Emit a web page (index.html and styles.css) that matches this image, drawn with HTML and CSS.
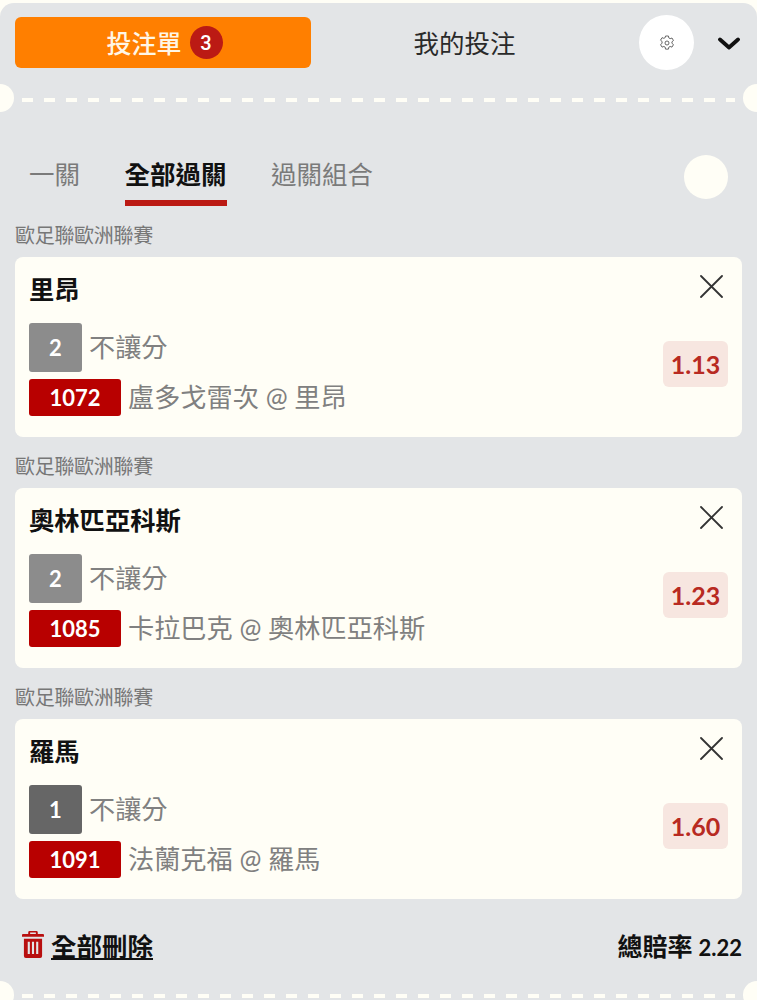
FILE: index.html
```html
<!DOCTYPE html>
<html lang="zh-Hant">
<head>
<meta charset="utf-8">
<title>投注單</title>
<link rel="stylesheet" href="styles.css">
</head>
<body>
<main class="sheet">
  <header class="top">
    <button class="tab-main"><span class="tab-main-txt">投注單</span><span class="count">3</span></button>
    <div class="tab-other">我的投注</div>
    <div class="gear">
      <svg width="16" height="16" viewBox="0 0 24 24" fill="none" stroke="#444" stroke-width="1.200" stroke-linejoin="round"><path d="M9.800 1.500h4.400l.5 2.900 2 1.100 2.800-1 2.200 3.800-2.300 1.900v2.300l2.300 1.900-2.200 3.800-2.800-1-2 1.100-.5 2.900H9.800l-.5-2.900-2-1.100-2.800 1-2.200-3.800 2.300-1.900V9.700L2.300 7.800l2.200-3.800 2.800 1 2-1.100z"/><circle cx="12" cy="12" r="3"/></svg>
    </div>
    <svg class="chev" width="22" height="13" viewBox="0 0 22 13" fill="none" stroke="#111" stroke-width="3.800" stroke-linecap="round" stroke-linejoin="round"><path d="M2 2.500l9 8 9-8"/></svg>
  </header>
  <div class="dash"></div>
  <span class="notch notch-l"></span>
  <span class="notch notch-r"></span>

  <nav class="tabs">
    <span class="tab">一關</span>
    <span class="tab tab-active">全部過關</span>
    <span class="tab">過關組合</span>
    <span class="dot"></span>
  </nav>

  <section class="group">
    <div class="league">歐足聯歐洲聯賽</div>
    <article class="card">
      <div class="card-head">
        <h2 class="team">里昂</h2>
        <svg class="close" width="24" height="24" viewBox="0 0 24 24" stroke="#333" stroke-width="1.800" stroke-linecap="round"><path d="M2 2l21 21M23 2L2 23"/></svg>
      </div>
      <div class="card-body">
        <div class="info">
          <div class="line"><span class="num">2</span><span class="txt">不讓分</span></div>
          <div class="line line-match"><span class="code">1072</span><span class="txt">盧多戈雷次 @ 里昂</span></div>
        </div>
        <div class="odds">1.13</div>
      </div>
    </article>
  </section>

  <section class="group">
    <div class="league">歐足聯歐洲聯賽</div>
    <article class="card">
      <div class="card-head">
        <h2 class="team">奧林匹亞科斯</h2>
        <svg class="close" width="24" height="24" viewBox="0 0 24 24" stroke="#333" stroke-width="1.800" stroke-linecap="round"><path d="M2 2l21 21M23 2L2 23"/></svg>
      </div>
      <div class="card-body">
        <div class="info">
          <div class="line"><span class="num">2</span><span class="txt">不讓分</span></div>
          <div class="line line-match"><span class="code">1085</span><span class="txt">卡拉巴克 @ 奧林匹亞科斯</span></div>
        </div>
        <div class="odds">1.23</div>
      </div>
    </article>
  </section>

  <section class="group">
    <div class="league">歐足聯歐洲聯賽</div>
    <article class="card">
      <div class="card-head">
        <h2 class="team">羅馬</h2>
        <svg class="close" width="24" height="24" viewBox="0 0 24 24" stroke="#333" stroke-width="1.800" stroke-linecap="round"><path d="M2 2l21 21M23 2L2 23"/></svg>
      </div>
      <div class="card-body">
        <div class="info">
          <div class="line"><span class="num num-dark">1</span><span class="txt">不讓分</span></div>
          <div class="line line-match"><span class="code">1091</span><span class="txt">法蘭克福 @ 羅馬</span></div>
        </div>
        <div class="odds">1.60</div>
      </div>
    </article>
  </section>

  <footer class="foot">
    <a class="del">
      <svg width="22" height="27" viewBox="0 0 23 28" fill="#b80f0f"><path d="M8 0h7a1.500 1.500 0 0 1 1.500 1.500V3H22a1 1 0 0 1 1 1v2H0V4a1 1 0 0 1 1-1h5.500V1.500A1.500 1.500 0 0 1 8 0zm.5 1.500V3h6V1.500z"/><path fill-rule="evenodd" d="M2 8h19v18a2 2 0 0 1-2 2H4a2 2 0 0 1-2-2zm4 3v13h2.200V11zm4.400 0v13h2.200V11zm4.400 0v13H17V11z"/></svg>
      <span class="del-txt">全部刪除</span>
    </a>
    <div class="total">總賠率 <span class="total-num">2.22</span></div>
  </footer>
  <div class="dash dash-bottom"></div>
  <span class="notch notch-bl"></span>
  <span class="notch notch-br"></span>
</main>
</body>
</html>
```
FILE: styles.css
```css
html, body {
  margin: 0;
  padding: 0;
  height: 1000px;
  overflow: hidden;
  background: #fffef6;
}
body {
  font-family: Lato, "Noto Sans CJK TC", sans-serif;
  color: #111;
}
.sheet {
  position: relative;
  height: 997px;
  margin-top: 3px;
  background: #e3e5e7;
  border-radius: 14px 14px 0 0;
  overflow: hidden;
}
.top {
  display: flex;
  align-items: center;
  height: 51px;
  padding: 14px 15px 0;
}
.tab-main {
  display: flex;
  align-items: center;
  justify-content: center;
  gap: 7px;
  width: 296px;
  height: 51px;
  padding: 0 0 0 3px;
  border: 0;
  border-radius: 6px;
  background: #ff7f00;
  color: #fff6e6;
  font: 500 25px Lato, "Noto Sans CJK TC", sans-serif;
}
.tab-main-txt {
  font-size: 25px;
  padding-bottom: 1px;
}
.count {
  display: flex;
  align-items: center;
  justify-content: center;
  width: 33px;
  height: 33px;
  margin-left: 1px;
  border-radius: 50%;
  background: #bb1a14;
  color: #fff;
  font: 500 20px Roboto, sans-serif;
}
.tab-other {
  width: 307px;
  padding-bottom: 3px;
  text-align: center;
  font-size: 25.500px;
  color: #2a2a2a;
}
.gear {
  display: flex;
  align-items: center;
  justify-content: center;
  flex: none;
  width: 55px;
  height: 55px;
  margin-left: 21px;
  border-radius: 50%;
  background: #fff;
}
.chev {
  flex: none;
  margin-left: 24px;
  margin-top: 1px;
}
.dash {
  height: 4px;
  margin: 30px 22px 0;
  background: repeating-linear-gradient(90deg, #fffef6 0 11px, transparent 11px 22px);
}
.notch {
  position: absolute;
  width: 28px;
  height: 28px;
  border-radius: 50%;
  background: #fffef6;
}
.notch-l { left: -14px; top: 81px; }
.notch-r { right: -14px; top: 81px; }
.notch-bl { left: -14px; top: 978px; }
.notch-br { right: -14px; top: 978px; }
.tabs {
  display: flex;
  align-items: flex-start;
  gap: 44.500px;
  height: 123px;
  padding: 0 29px;
}
.tab {
  margin-top: 54px;
  padding-bottom: 7px;
  height: 37px;
  line-height: 37px;
  font-size: 25.500px;
  color: #7a7a7a;
  border-bottom: 6px solid transparent;
}
.tab-active {
  font-weight: 700;
  color: #111;
  border-bottom-color: #bb1a14;
}
.dot {
  width: 44px;
  height: 44px;
  margin: 53px 0 0 auto;
  border-radius: 50%;
  background: #fffef6;
}
.group {
  padding: 0 15px;
  margin-bottom: 19.100px;
}
.league {
  height: 20px;
  line-height: 20px;
  margin-bottom: 12px;
  font-size: 20px;
  color: #777;
  letter-spacing: -.3px;
}
.card {
  height: 180px;
  padding: 0 14px;
  box-sizing: border-box;
  background: #fffef6;
  border-radius: 8px;
}
.card-head {
  display: flex;
  justify-content: space-between;
  height: 66px;
}
.team {
  margin: 14px 0 0;
  line-height: 36px;
  font-size: 25.300px;
  font-weight: 700;
  color: #111;
}
.close {
  margin-top: 17px;
  margin-right: 5px;
}
.card-body {
  display: flex;
  justify-content: space-between;
  align-items: center;
}
.line {
  display: flex;
  align-items: center;
  gap: 7px;
  height: 49px;
}
.line-match {
  height: 37px;
  margin-top: 7px;
  gap: 7px;
}
.num {
  display: flex;
  align-items: center;
  justify-content: center;
  width: 53px;
  height: 49px;
  border-radius: 3px;
  background: #8c8c8c;
  color: #fff;
  font-size: 22px;
  font-weight: 700;
}
.num-dark { background: #666; }
.code {
  display: flex;
  align-items: center;
  justify-content: center;
  width: 92px;
  height: 37px;
  border-radius: 3px;
  background: #b80000;
  color: #fff;
  font-size: 22px;
  font-weight: 700;
}
.txt {
  padding-bottom: 3px;
  font-size: 26.200px;
  color: #808080;
}
.odds {
  display: flex;
  align-items: center;
  justify-content: center;
  width: 65px;
  height: 46px;
  margin-bottom: 11px;
  border-radius: 6px;
  background: #f7e6e0;
  color: #b82a22;
  font-size: 25px;
  font-weight: 700;
}
.foot {
  display: flex;
  align-items: center;
  justify-content: space-between;
  height: 48px;
  margin-top: 21.600px;
  padding: 0 15px 0 22px;
}
.del {
  display: flex;
  align-items: center;
  gap: 7px;
}
.del-txt {
  font-size: 25.500px;
  font-weight: 700;
  text-decoration: underline;
  color: #111;
}
.total {
  font-size: 25px;
  font-weight: 700;
  color: #111;
}
.total-num { font-size: 22px; }
.dash-bottom { margin-top: 25px; }
```
